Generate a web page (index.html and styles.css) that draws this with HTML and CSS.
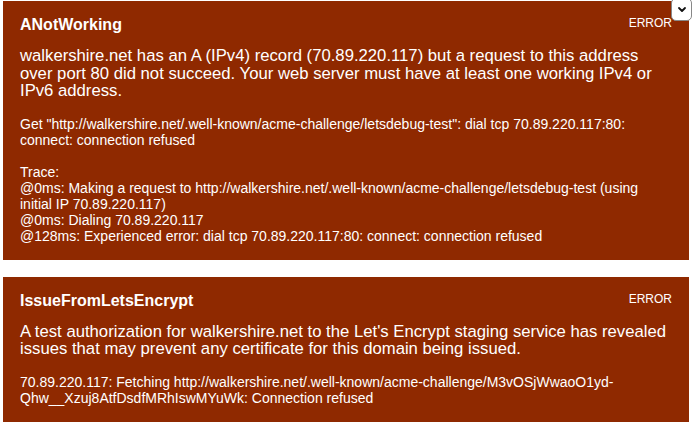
FILE: index.html
```html
<!DOCTYPE html>
<html>
<head>
<meta charset="utf-8">
<link rel="stylesheet" href="styles.css">
</head>
<body>
<div class="list">
  <div class="card">
    <div class="head">
      <div class="title">ANotWorking</div>
      <div class="sev">ERROR</div>
    </div>
    <p class="msg">walkershire.net has an A (IPv4) record (70.89.220.117) but a request to this address over port 80 did not succeed. Your web server must have at least one working IPv4 or IPv6 address.</p>
    <div class="detail">Get "http://walkershire.net/.well-known/acme-challenge/letsdebug-test": dial tcp 70.89.220.117:80: connect: connection refused

Trace:
@0ms: Making a request to http://walkershire.net/.well-known/acme-challenge/letsdebug-test (using initial IP 70.89.220.117)
@0ms: Dialing 70.89.220.117
@128ms: Experienced error: dial tcp 70.89.220.117:80: connect: connection refused</div>
  </div>
  <div class="card">
    <div class="head">
      <div class="title">IssueFromLetsEncrypt</div>
      <div class="sev">ERROR</div>
    </div>
    <p class="msg">A test authorization for walkershire.net to the Let's Encrypt staging service has revealed issues that may prevent any certificate for this domain being issued.</p>
    <div class="detail">70.89.220.117: Fetching http://walkershire.net/.well-known/acme-challenge/M3vOSjWwaoO1yd-Qhw__Xzuj8AtfDsdfMRhIswMYuWk: Connection refused</div>
  </div>
</div>
<button class="scroll" aria-label="Collapse">
  <svg width="10" height="7" viewBox="0 0 10 7"><path d="M2 2 L5 5 L8 2" fill="none" stroke="#111" stroke-width="1.8" stroke-linecap="round" stroke-linejoin="round"/></svg>
</button>
</body>
</html>
```
FILE: styles.css
```css
html, body {
  margin: 0;
  padding: 0;
  background: #fff;
  font-family: "Liberation Sans", Arial, Helvetica, sans-serif;
  color: #fff;
  overflow: hidden;
}
.list {
  display: flex;
  flex-direction: column;
  gap: 17px;
  padding: 1px 4px 0 3px;
}
.card {
  background: #8f2900;
  padding: 14px 17px 16px 17px;
}
.head {
  display: flex;
  justify-content: space-between;
  align-items: flex-start;
}
.title {
  font-size: 16px;
  font-weight: bold;
  line-height: 20px;
}
.sev {
  font-size: 12px;
  line-height: 16px;
  margin-top: 0;
}
.msg {
  font-size: 16.7px;
  line-height: 17.5px;
  margin: 12px 0 0 0;
}
.detail {
  font-size: 14px;
  line-height: 16px;
  white-space: pre-wrap;
  margin-top: 16px;
}
.scroll {
  position: absolute;
  top: -2px;
  right: 1px;
  width: 21px;
  height: 23px;
  padding: 0;
  border: 1px solid #888;
  border-radius: 5px;
  background: #fff;
  display: flex;
  align-items: center;
  justify-content: center;
}
```
